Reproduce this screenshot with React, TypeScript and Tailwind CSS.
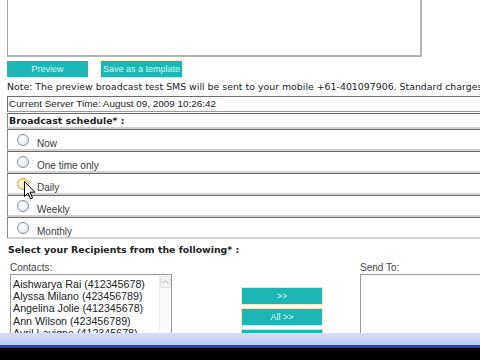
import React from "react";

const verdana = { fontFamily: '"DejaVu Sans", Verdana, sans-serif' };
const arial = { fontFamily: '"Liberation Sans", Arial, sans-serif' };

function Radio({ hover }: { hover?: boolean }) {
  return (
    <div
      className={
        "w-[12px] h-[12px] rounded-full border shrink-0 " +
        (hover
          ? "border-[#d9a63a] bg-[radial-gradient(circle_at_40%_40%,#fff8d8,#e8d890)]"
          : "border-[#7d8fa3] bg-[radial-gradient(circle_at_40%_40%,#ffffff,#dde2e8)]")
      }
    />
  );
}

function Row({ label, hover }: { label: string; hover?: boolean }) {
  return (
    <div className="h-[22px] border-t border-l border-t-[#6a6a6a] border-l-[#8a8a8a] border-b-2 border-b-[#d2d2d2] flex items-start">
      <div className="pl-[9px] pt-[4px]">
        <Radio hover={hover} />
      </div>
      <div className="pl-[8px] pt-[8px] text-[10px] leading-[12px] text-[#3a3a3a]" style={arial}>
        {label}
      </div>
    </div>
  );
}

function TealButton({ label, w }: { label: string; w: string }) {
  return (
    <div
      className={
        w +
        " h-[16px] bg-[#1cb6b4] text-[#dff4f2] text-[9px] leading-[16px] text-center"
      }
      style={arial}
    >
      {label}
    </div>
  );
}

export default function App() {
  return (
    <div className="relative w-[480px] h-[360px] overflow-hidden bg-white">
      <div className="h-[333px] overflow-hidden">
        {/* textarea */}
        <div className="ml-[7px] mt-[-4px] w-[415px] h-[61px] border border-[#a8a8a8] border-r-2 border-b-2 border-r-[#b4b4b4] border-b-[#b4b4b4] bg-white" />

        {/* buttons */}
        <div className="flex gap-[13px] ml-[7px] mt-[4px]">
          <TealButton label="Preview" w="w-[81px]" />
          <div className="w-[81px] h-[16px] bg-[#1cb6b4] text-[#dff4f2] text-[9px] leading-[16px] text-center outline outline-1 outline-[#f3ecc6]" style={arial}>
            Save as a template
          </div>
        </div>

        {/* note */}
        <div className="ml-[7px] mt-[3px] h-[14px] text-[9.4px] leading-[14px] text-[#222] whitespace-nowrap" style={verdana}>
          Note: The preview broadcast test SMS will be sent to your mobile +61-401097906. Standard charges apply.
        </div>

        {/* server time */}
        <div className="ml-[7px] mt-[2px] w-[500px] h-[16px] border border-[#6f6f6f] border-b-[#9a9a9a] text-[9.9px] leading-[14px] pl-[1px] text-[#222] whitespace-nowrap" style={arial}>
          Current Server Time: August 09, 2009 10:26:42
        </div>

        {/* schedule */}
        <div className="ml-[7px] w-[500px] mt-[1px]">
          <div className="h-[16px] border-t border-l border-t-[#6a6a6a] border-l-[#8a8a8a] border-b-2 border-b-[#d2d2d2] text-[9.4px] leading-[13px] font-bold text-[#222] pl-[1px] whitespace-nowrap" style={verdana}>
            Broadcast schedule* :
          </div>
          <Row label="Now" />
          <Row label="One time only" />
          <Row label="Daily" hover />
          <Row label="Weekly" />
          <Row label="Monthly" />
        </div>

        {/* recipients */}
        <div className="ml-[8px] mt-[4px] h-[13px] text-[9.4px] leading-[13px] font-bold text-[#222] whitespace-nowrap" style={verdana}>
          Select your Recipients from the following* :
        </div>

        <div className="flex mt-[6px]">
          <div className="ml-[10px] w-[162px] shrink-0">
            <div className="h-[12px] text-[10px] leading-[12px] text-[#444]" style={arial}>
              Contacts:
            </div>
            <div className="h-[80px] border border-[#9a9a9a] flex">
              <div className="flex-1 pl-[2px] pt-[3px] text-[10.7px] leading-[12.2px] text-[#222] whitespace-nowrap overflow-hidden" style={arial}>
                <div>Aishwarya Rai (412345678)</div>
                <div>Alyssa Milano (423456789)</div>
                <div>Angelina Jolie (412345678)</div>
                <div>Ann Wilson (423456789)</div>
                <div>Avril Lavigne (412345678)</div>
              </div>
              <div className="w-[12px] border-l border-[#eeeeee] bg-[#fafafa] flex flex-col items-center">
                <div className="w-[11px] h-[12px] mt-[1px] border border-[#e2e2e2] rounded-[2px] bg-[#f4f4f4] flex items-center justify-center">
                  <svg width="7" height="4" viewBox="0 0 7 4">
                    <path d="M0.5 3.5 L3.5 0.5 L6.5 3.5" stroke="#b8b8b8" strokeWidth="1" fill="none" />
                  </svg>
                </div>
              </div>
            </div>
          </div>

          <div className="ml-[69px] mt-[25px] flex flex-col gap-[3px] shrink-0">
            <div className="border border-[#f0e7c2]">
              <TealButton label=">>" w="w-[80px]" />
            </div>
            <div className="border border-[#f0e7c2]">
              <TealButton label="All >>" w="w-[80px]" />
            </div>
            <div className="border border-[#e8d890]">
              <TealButton label="<<" w="w-[80px]" />
            </div>
          </div>

          <div className="ml-[37px] shrink-0">
            <div className="h-[12px] text-[10px] leading-[12px] text-[#444]" style={arial}>
              Send To:
            </div>
            <div className="w-[140px] h-[80px] border border-[#9a9a9a]" />
          </div>
        </div>
      </div>

      {/* bottom bars */}
      <div className="h-[12px] bg-gradient-to-b from-[#d6def7] to-[#b9c7ef]" />
      <div className="h-[3px] bg-[#1f47b4]" />
      <div className="h-[12px] bg-black" />

      {/* cursor */}
      <svg className="absolute left-[24px] top-[181px]" width="12" height="19" viewBox="0 0 12 19">
        <path d="M0.5 0.5 L0.5 15.5 L4 12 L6.5 18 L8.5 17 L6 11.2 L10.8 11.2 Z" fill="#fff" stroke="#000" strokeWidth="1" strokeLinejoin="round" />
      </svg>
    </div>
  );
}
